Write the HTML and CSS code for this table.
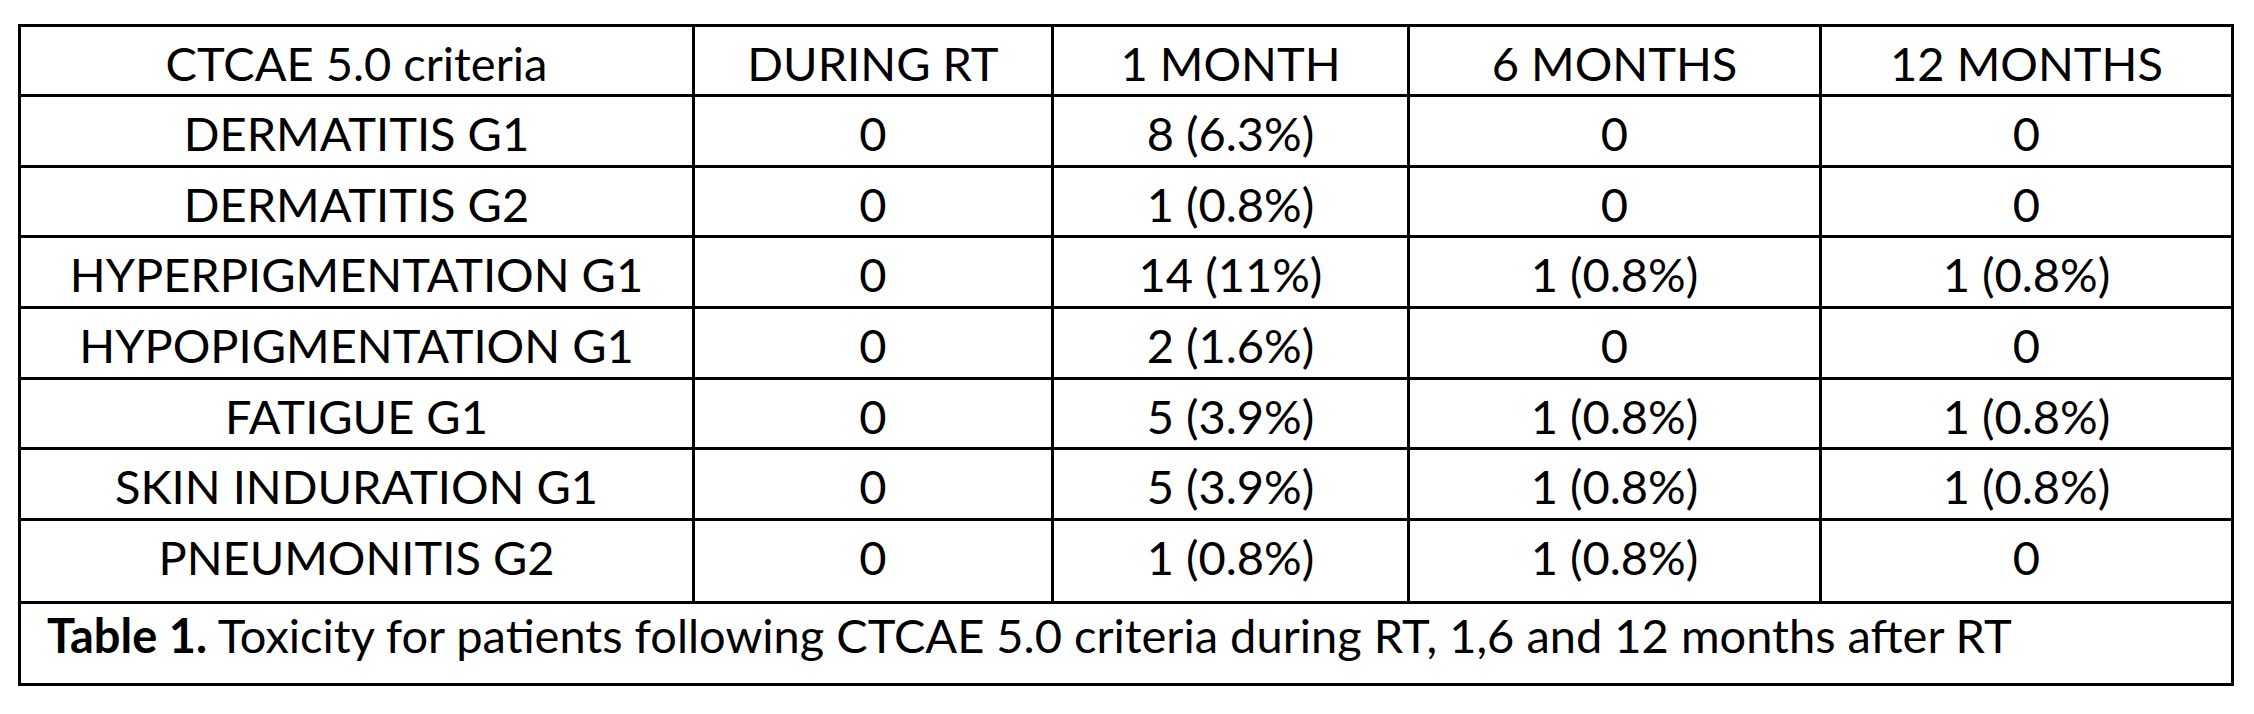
FILE: index.html
```html
<!DOCTYPE html>
<html lang="en">
<head>
<meta charset="utf-8">
<title>Table 1. Toxicity</title>
<link rel="stylesheet" href="styles.css">
</head>
<body>
<div class="tox-table" role="table" aria-label="Toxicity for patients following CTCAE 5.0 criteria">
  <div class="cell" role="columnheader">CTCAE 5.0 criteria</div>
  <div class="cell" role="columnheader">DURING RT</div>
  <div class="cell" role="columnheader">1 MONTH</div>
  <div class="cell" role="columnheader">6 MONTHS</div>
  <div class="cell" role="columnheader">12 MONTHS</div>

  <div class="cell" role="rowheader">DERMATITIS G1</div>
  <div class="cell" role="cell">0</div>
  <div class="cell" role="cell">8 (6.3%)</div>
  <div class="cell" role="cell">0</div>
  <div class="cell" role="cell">0</div>

  <div class="cell" role="rowheader">DERMATITIS G2</div>
  <div class="cell" role="cell">0</div>
  <div class="cell" role="cell">1 (0.8%)</div>
  <div class="cell" role="cell">0</div>
  <div class="cell" role="cell">0</div>

  <div class="cell" role="rowheader">HYPERPIGMENTATION G1</div>
  <div class="cell" role="cell">0</div>
  <div class="cell" role="cell">14 (11%)</div>
  <div class="cell" role="cell">1 (0.8%)</div>
  <div class="cell" role="cell">1 (0.8%)</div>

  <div class="cell" role="rowheader">HYPOPIGMENTATION G1</div>
  <div class="cell" role="cell">0</div>
  <div class="cell" role="cell">2 (1.6%)</div>
  <div class="cell" role="cell">0</div>
  <div class="cell" role="cell">0</div>

  <div class="cell" role="rowheader">FATIGUE G1</div>
  <div class="cell" role="cell">0</div>
  <div class="cell" role="cell">5 (3.9%)</div>
  <div class="cell" role="cell">1 (0.8%)</div>
  <div class="cell" role="cell">1 (0.8%)</div>

  <div class="cell" role="rowheader">SKIN INDURATION G1</div>
  <div class="cell" role="cell">0</div>
  <div class="cell" role="cell">5 (3.9%)</div>
  <div class="cell" role="cell">1 (0.8%)</div>
  <div class="cell" role="cell">1 (0.8%)</div>

  <div class="cell" role="rowheader">PNEUMONITIS G2</div>
  <div class="cell" role="cell">0</div>
  <div class="cell" role="cell">1 (0.8%)</div>
  <div class="cell" role="cell">1 (0.8%)</div>
  <div class="cell" role="cell">0</div>

  <div class="cell caption" role="caption"><b>Table 1.</b> Toxicity for patients following CTCAE 5.0 criteria during RT, 1,6 and 12 months after RT</div>
</div>
</body>
</html>
```

FILE: styles.css
```css
html, body {
  margin: 0;
  padding: 0;
  background: #ffffff;
}

body {
  font-family: Lato, "Liberation Sans", sans-serif;
  color: #000000;
}

.tox-table {
  display: grid;
  grid-template-columns: 674px 359px 356px 412px 412px;
  grid-template-rows: 70px 71px 70px 71px 71px 70px 71px 83px 82px;
  width: max-content;
  margin: 24px 0 0 18px;
  border-left: 3px solid #000;
  border-top: 3px solid #000;
}

.cell {
  box-sizing: border-box;
  border-right: 3px solid #000;
  border-bottom: 3px solid #000;
  font-size: 47px;
  line-height: 60px;
  padding-top: 6px;
  text-align: center;
  white-space: nowrap;
}

.caption {
  grid-column: 1 / -1;
  text-align: left;
  padding-left: 26px;
  padding-top: 1px;
}

.caption b {
  font-weight: 700;
}
```
